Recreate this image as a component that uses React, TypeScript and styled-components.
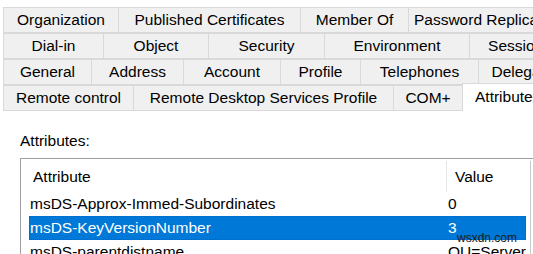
import React from "react";
import { createGlobalStyle, styled } from "styled-components";

const GlobalStyle = createGlobalStyle`
  html, body {
    margin: 0;
    padding: 0;
    background: #ffffff;
    overflow: hidden;
  }
  body {
    font-family: "Liberation Sans", Arial, sans-serif;
    font-size: 15.5px;
    color: #000000;
  }
`;

const Page = styled.div`
  width: 533px;
  height: 254px;
  overflow: hidden;
  background: #ffffff;
`;

const TabArea = styled.div`
  display: flex;
  flex-direction: column;
  padding: 7px 0 0 3px;
  background: #ffffff;
`;

const TabRow = styled.div`
  display: flex;
  height: 26px;
`;

const Tab = styled.div<{ $w: number; $active?: boolean }>`
  flex: 0 0 ${(p) => p.$w}px;
  display: flex;
  align-items: center;
  box-sizing: border-box;
  white-space: nowrap;
  overflow: hidden;
  background: ${(p) => (p.$active ? "#ffffff" : "#f0f0f0")};
  border: 1px solid #d9d9d9;
  border-right: none;
  border-bottom: ${(p) => (p.$active ? "none" : "1px solid #d9d9d9")};
  margin-top: ${(p) => (p.$active ? "-2px" : "0")};
  height: ${(p) => (p.$active ? "28px" : "26px")};
  padding-bottom: ${(p) => (p.$active ? "2px" : "0")};
  justify-content: ${(p) => (p.$active ? "flex-start" : "center")};
  padding-left: ${(p) => (p.$active ? "12px" : "0")};
`;

const Panel = styled.div`
  display: flex;
  flex-direction: column;
  padding: 20px 0 0 20px;
`;

const Label = styled.div`
  height: 20px;
  line-height: 20px;
  margin-bottom: 7px;
`;

const ListBox = styled.div`
  position: relative;
  width: 540px;
  height: 120px;
  box-sizing: border-box;
  border: 1px solid #a0a0a0;
  padding: 2px 0 0 8px;
  display: flex;
  flex-direction: column;
`;

const ScrollTrack = styled.div`
  position: absolute;
  top: 2px;
  left: 509px;
  width: 30px;
  bottom: 0;
  border-left: 1px solid #c8c8c8;
  background: #ffffff;
`;

const HeaderRow = styled.div`
  display: flex;
  height: 31px;
  align-items: center;
`;

const HeaderCell = styled.div<{ $w: number; $divider?: boolean }>`
  flex: 0 0 ${(p) => p.$w}px;
  box-sizing: border-box;
  height: 31px;
  line-height: 31px;
  padding-left: ${(p) => (p.$divider ? "8px" : "4px")};
  border-left: ${(p) => (p.$divider ? "1px solid #e5e5e5" : "none")};
`;

const Row = styled.div<{ $selected?: boolean }>`
  display: flex;
  height: 24px;
  align-items: center;
  width: 497px;
  box-sizing: border-box;
  background: ${(p) => (p.$selected ? "#0078d7" : "transparent")};
  color: ${(p) => (p.$selected ? "#ffffff" : "#000000")};
  outline: ${(p) => (p.$selected ? "1px dotted #7a4a00" : "none")};
  outline-offset: -1px;
  position: relative;
`;

const Cell = styled.div<{ $w: number }>`
  flex: 0 0 ${(p) => p.$w}px;
  box-sizing: border-box;
  padding-left: 1px;
  white-space: nowrap;
  overflow: hidden;
`;

const Watermark = styled.div`
  position: absolute;
  left: 428px;
  top: 15px;
  font-size: 12px;
  line-height: 14px;
  color: #1a1a1a;
  font-family: "Liberation Sans", sans-serif;
`;

const tabRows: { label: string; w: number; active?: boolean }[][] = [
  [
    { label: "Organization", w: 115 },
    { label: "Published Certificates", w: 182 },
    { label: "Member Of", w: 108 },
    { label: "Password Replication", w: 160 },
  ],
  [
    { label: "Dial-in", w: 100 },
    { label: "Object", w: 105 },
    { label: "Security", w: 116 },
    { label: "Environment", w: 145 },
    { label: "Sessions", w: 100 },
  ],
  [
    { label: "General", w: 88 },
    { label: "Address", w: 92 },
    { label: "Account", w: 97 },
    { label: "Profile", w: 80 },
    { label: "Telephones", w: 118 },
    { label: "Delegation", w: 100 },
  ],
  [
    { label: "Remote control", w: 130 },
    { label: "Remote Desktop Services Profile", w: 260 },
    { label: "COM+", w: 69 },
    { label: "Attributes", w: 100, active: true },
  ],
];

const rows = [
  { name: "msDS-Approx-Immed-Subordinates", value: "0" },
  { name: "msDS-KeyVersionNumber", value: "3", selected: true },
  { name: "msDS-parentdistname", value: "OU=Servers,DC=corp" },
];

export default function App() {
  return (
    <Page>
      <GlobalStyle />
      <TabArea>
        {tabRows.map((row, i) => (
          <TabRow key={i}>
            {row.map((t) => (
              <Tab key={t.label} $w={t.w} $active={t.active}>
                {t.label}
              </Tab>
            ))}
          </TabRow>
        ))}
      </TabArea>
      <Panel>
        <Label>Attributes:</Label>
        <ListBox>
          <HeaderRow>
            <HeaderCell $w={417}>Attribute</HeaderCell>
            <HeaderCell $w={100} $divider>
              Value
            </HeaderCell>
          </HeaderRow>
          {rows.map((r) => (
            <Row key={r.name} $selected={r.selected}>
              <Cell $w={418}>{r.name}</Cell>
              <Cell $w={79}>{r.value}</Cell>
              {r.selected && <Watermark>wsxdn.com</Watermark>}
            </Row>
          ))}
          <ScrollTrack />
        </ListBox>
      </Panel>
    </Page>
  );
}
